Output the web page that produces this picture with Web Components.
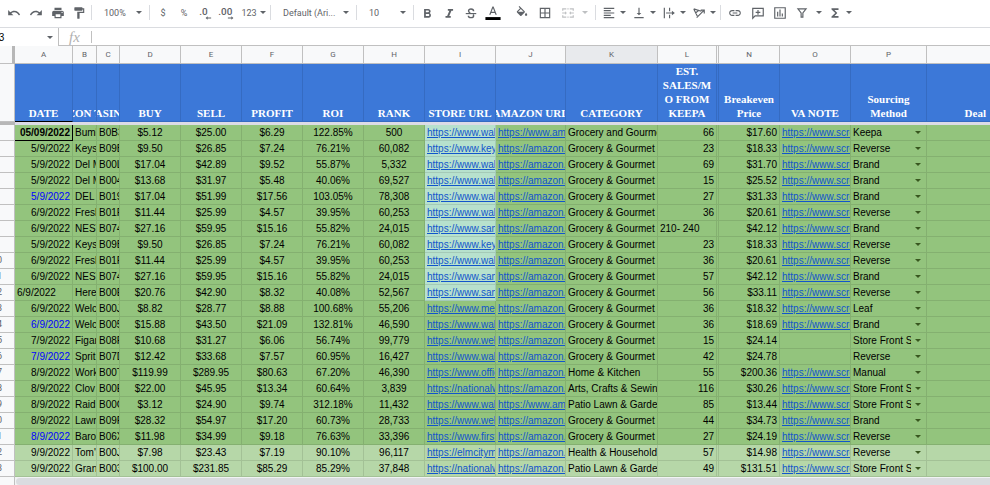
<!DOCTYPE html>
<html lang="en">
<head>
<meta charset="utf-8">
<meta name="viewport" content="width=device-width, initial-scale=1">
<title>Sourcing sheet</title>
<style>
    body {
        margin: 0;
        background: #fff;
        color: #000;
        font-family: "Liberation Sans", Arial, sans-serif;
        font-size: 10px;
        overflow: hidden;
    }
</style>
</head>
<body>
<sheet-app>
    <sheet-toolbar slot="toolbar">
        <tool-button icon="undo" label="Undo"></tool-button>
        <tool-button icon="redo" label="Redo"></tool-button>
        <tool-button icon="print" label="Print"></tool-button>
        <tool-button icon="paint" label="Paint format" class="narrow"></tool-button>
        <tool-divider></tool-divider>
        <tool-select label="Zoom" value="100%" class="zoom"></tool-select>
        <tool-divider></tool-divider>
        <tool-button label="Format as currency">$</tool-button>
        <tool-button label="Format as percent" class="narrow">%</tool-button>
        <tool-button icon="decLess" label="Decrease decimal places"></tool-button>
        <tool-button icon="decMore" label="Increase decimal places"></tool-button>
        <tool-button label="More formats" menu class="formats">123</tool-button>
        <tool-divider></tool-divider>
        <tool-select label="Font" value="Default (Ari..." class="font"></tool-select>
        <tool-divider></tool-divider>
        <tool-select label="Font size" value="10" class="size"></tool-select>
        <tool-divider></tool-divider>
        <tool-button icon="bold" label="Bold"></tool-button>
        <tool-button icon="italic" label="Italic"></tool-button>
        <tool-button icon="strike" label="Strikethrough"></tool-button>
        <tool-button icon="color" label="Text color"></tool-button>
        <tool-divider blank></tool-divider>
        <tool-button icon="fill" label="Fill color"></tool-button>
        <tool-button icon="borders" label="Borders" class="wide"></tool-button>
        <tool-button icon="merge" label="Merge cells" menu="wide" disabled></tool-button>
        <tool-divider></tool-divider>
        <tool-button icon="alignLeft" label="Horizontal align" menu></tool-button>
        <tool-button icon="alignBottom" label="Vertical align" menu></tool-button>
        <tool-button icon="wrap" label="Text wrapping" menu></tool-button>
        <tool-button icon="rotate" label="Text rotation" menu></tool-button>
        <tool-divider></tool-divider>
        <tool-button icon="link" label="Insert link" class="wide"></tool-button>
        <tool-button icon="comment" label="Insert comment"></tool-button>
        <tool-button icon="chart" label="Insert chart"></tool-button>
        <tool-button icon="filter" label="Create a filter" menu="wide"></tool-button>
        <tool-button icon="sigma" label="Functions" menu="wide" class="slim"></tool-button>
    </sheet-toolbar>
    <formula-bar slot="formula" cell="A3"></formula-bar>
    <sheet-grid slot="grid"></sheet-grid>
</sheet-app>

<script>
const ICONS = {
    undo: '<path d="M12.5 8c-2.65 0-5.05.99-6.9 2.6L2 7v9h9l-3.62-3.62c1.39-1.16 3.16-1.88 5.12-1.88 3.54 0 6.55 2.31 7.6 5.5l2.37-.78C21.08 11.03 17.15 8 12.5 8z"/>',
    redo: '<path d="M18.4 10.6C16.55 8.99 14.15 8 11.5 8c-4.65 0-8.58 3.03-9.96 7.22L3.9 16c1.05-3.19 4.05-5.5 7.6-5.5 1.95 0 3.73.72 5.12 1.88L13 16h9V7l-3.6 3.6z"/>',
    print: '<path d="M19 8H5c-1.66 0-3 1.34-3 3v6h4v4h12v-4h4v-6c0-1.66-1.34-3-3-3zm-3 11H8v-5h8v5zm3-7c-.55 0-1-.45-1-1s.45-1 1-1 1 .45 1 1-.45 1-1 1zm-1-9H6v4h12V3z"/>',
    paint: '<path d="M18 4V3c0-.55-.45-1-1-1H5c-.55 0-1 .45-1 1v4c0 .55.45 1 1 1h12c.55 0 1-.45 1-1V6h1v4H9v11c0 .55.45 1 1 1h2c.55 0 1-.45 1-1v-9h8V4h-3z"/>',
    decLess: '<text x="2" y="16" font-size="17" font-weight="500">.0</text><path d="M13 20.500l3.500-3v2h6v2h-6v2z"/>',
    decMore: '<text x="-3" y="16" font-size="17" font-weight="500">.00</text><path d="M23 20.500l-3.500-3v2h-6v2h6v2z"/>',
    bold: '<path d="M16.600 11.790c.97-.67 1.650-1.770 1.650-2.790 0-2.260-1.750-4-4-4H7v15h8.040c2.090 0 3.710-2.200 3.710-4.290 0-1.520-.86-3.320-2.150-3.920zM10 7.500h4c.83 0 1.500.67 1.500 1.500s-.67 1.500-1.500 1.500h-4v-3zm4.500 9.500H10v-3.500h4.500c.83 0 1.500.9 1.500 1.750s-.67 1.750-1.500 1.750z"/>',
    italic: '<path d="M10 5v3h2.600l-3.800 9H6v3h9v-3h-2.600l3.800-9H19V5z"/>',
    strike: '<path d="M3 12h18v2H3z"/><path d="M16.500 9c0-2.500-2-3.800-4.500-3.800S7.800 6.500 7.800 8.500c0 1.500 1 2.500 3 3M7.500 16.500c0 2 2 3.500 4.500 3.500s4.500-1.200 4.500-3.300c0-1-.4-1.700-1-2.300" fill="none" stroke="currentColor" stroke-width="2.400"/>',
    color: '<path d="M11 1L5.500 15h2.300l1.100-3h6.200l1.100 3h2.300L13 1h-2zm-1.400 9L12 3.700 14.400 10H9.600z"/><path d="M-1 19h26v5H-1z" fill="#000"/>',
    fill: '<path d="M16.560 8.940L7.620 0 6.210 1.410l2.380 2.380-5.150 5.150c-.59.59-.59 1.540 0 2.120l5.500 5.500c.29.29.68.44 1.060.44s.77-.15 1.060-.44l5.500-5.500c.59-.58.59-1.530 0-2.120zM5.210 10L10 5.210 14.790 10H5.210zM19 11.500s-2 2.170-2 3.500c0 1.100.9 2 2 2s2-.9 2-2c0-1.330-2-3.500-2-3.500z"/>',
    borders: '<path d="M3 3v18h18V3H3zm8 16H5v-6h6v6zm0-8H5V5h6v6zm8 8h-6v-6h6v6zm0-8h-6V5h6v6z"/>',
    merge: '<path d="M2 8V4h7v2H4v2zM15 4h7v4h-2V6h-5zM2 16v4h7v-2H4v-2zM15 20h7v-4h-2v2h-5zM11 4h2v2h-2zM11 18h2v2h-2zM2 11h5V9l3 3-3 3v-2H2zM22 11h-5V9l-3 3 3 3v-2h5z"/>',
    alignLeft: '<path d="M15 15H3v2h12v-2zm0-8H3v2h12V7zM3 13h18v-2H3v2zm0 8h18v-2H3v2zM3 3v2h18V3H3z"/>',
    alignBottom: '<path d="M16 12h-3V3h-2v9H8l4 4 4-4zM4 19v2h16v-2H4z"/>',
    wrap: '<path d="M3 3h2v18H3zM12 3h2v6h-2zM12 15h2v6h-2zM7 11h10V8l5 4-5 4v-3H7z"/>',
    rotate: '<path d="M3 5l13 4M3 5l6 12M6 12l6-5M8 20L20 8M21 13V7h-6" fill="none" stroke="currentColor" stroke-width="2"/>',
    link: '<path d="M3.900 12c0-1.710 1.390-3.100 3.100-3.100h4V7H7c-2.760 0-5 2.240-5 5s2.240 5 5 5h4v-1.900H7c-1.710 0-3.100-1.390-3.100-3.100zM8 13h8v-2H8v2zm9-6h-4v1.900h4c1.710 0 3.100 1.390 3.100 3.100s-1.390 3.100-3.100 3.100h-4V17h4c2.760 0 5-2.240 5-5s-2.240-5-5-5z"/>',
    comment: '<path d="M3 4h18v13H7l-4 4z" fill="none" stroke="currentColor" stroke-width="2"/><path d="M11 7h2v3h3v2h-3v3h-2v-3H8v-2h3z"/>',
    chart: '<path d="M3 3h18v18H3z" fill="none" stroke="currentColor" stroke-width="2"/><path d="M7 10h2v8H7zM11 6h2v12h-2zM15 13h2v5h-2z"/>',
    filter: '<path d="M5 5h14l-5.500 7v7h-3v-7z" fill="none" stroke="currentColor" stroke-width="2"/>',
    sigma: '<path d="M18 4H6v2l6.500 6L6 18v2h12v-3h-7l5-5-5-5h7z"/>'
};

const COLUMNS = [
    { id: 'A', title: 'DATE', width: 58, align: 'right' },
    { id: 'B', title: 'AMAZON TITLE', width: 24 },
    { id: 'C', title: 'ASIN', width: 23 },
    { id: 'D', title: 'BUY', width: 61, align: 'center' },
    { id: 'E', title: 'SELL', width: 61, align: 'center' },
    { id: 'F', title: 'PROFIT', width: 61, align: 'center' },
    { id: 'G', title: 'ROI', width: 61, align: 'center' },
    { id: 'H', title: 'RANK', width: 61, align: 'center' },
    { id: 'I', title: 'STORE URL', width: 71, type: 'link' },
    { id: 'J', title: 'AMAZON URL', width: 70, type: 'link' },
    { id: 'K', title: 'CATEGORY', width: 92, selected: true },
    { id: 'L', title: 'EST.\nSALES/M\nO FROM\nKEEPA', width: 59, align: 'right' },
    { id: '', title: '', width: 2, type: 'hidden' },
    { id: 'N', title: 'Breakeven\nPrice', width: 61, align: 'right' },
    { id: 'O', title: 'VA NOTE', width: 71, type: 'link' },
    { id: 'P', title: 'Sourcing\nMethod', width: 76, type: 'select' },
    { id: '', title: 'Deal', type: 'last' }
];

const AMZ = 'https://amazon.c';
const AMW = 'https://www.amaz';
const SCR = 'https://www.scree';
const GG = 'Grocery & Gourmet';
const STORE = 'Store Front St';

const ROWS = [
    ['05/09/2022', 'Bumb', 'B0B3', '$5.12', '$25.00', '$6.29', '122.85%', '500', 'https://www.walm', AMW, 'Grocery and Gourme', '66', '', '$17.60', SCR, 'Keepa'],
    ['5/9/2022', 'Keys', 'B09B', '$9.50', '$26.85', '$7.24', '76.21%', '60,082', 'https://www.keys', AMZ, GG, '23', '', '$18.33', SCR, 'Reverse'],
    ['5/9/2022', 'Del M', 'B00L', '$17.04', '$42.89', '$9.52', '55.87%', '5,332', 'https://www.walm', AMZ, GG, '69', '', '$31.70', SCR, 'Brand'],
    ['5/9/2022', 'Del M', 'B004', '$13.68', '$31.97', '$5.48', '40.06%', '69,527', 'https://www.walm', AMZ, GG, '15', '', '$25.52', SCR, 'Brand'],
    ['5/9/2022', 'DEL', 'B019', '$17.04', '$51.99', '$17.56', '103.05%', '78,308', 'https://www.walm', AMZ, GG, '27', '', '$31.33', SCR, 'Brand'],
    ['6/9/2022', 'Fresh', 'B01F', '$11.44', '$25.99', '$4.57', '39.95%', '60,253', 'https://www.walm', AMZ, GG, '36', '', '$20.61', SCR, 'Reverse'],
    ['6/9/2022', 'NEST', 'B074', '$27.16', '$59.95', '$15.16', '55.82%', '24,015', 'https://www.sams', AMZ, GG, '210- 240', '', '$42.12', SCR, 'Brand'],
    ['5/9/2022', 'Keys', 'B09B', '$9.50', '$26.85', '$7.24', '76.21%', '60,082', 'https://www.keys', AMZ, GG, '23', '', '$18.33', SCR, 'Reverse'],
    ['6/9/2022', 'Fresh', 'B01F', '$11.44', '$25.99', '$4.57', '39.95%', '60,253', 'https://www.walm', AMZ, GG, '36', '', '$20.61', SCR, 'Reverse'],
    ['6/9/2022', 'NEST', 'B074', '$27.16', '$59.95', '$15.16', '55.82%', '24,015', 'https://www.sams', AMZ, GG, '57', '', '$42.12', SCR, 'Brand'],
    ['6/9/2022', 'Here', 'B00E', '$20.76', '$42.90', '$8.32', '40.08%', '52,567', 'https://www.sams', AMZ, GG, '56', '', '$33.11', SCR, 'Reverse'],
    ['6/9/2022', 'Welc', 'B00J', '$8.82', '$28.77', '$8.88', '100.68%', '55,206', 'https://www.meij', AMZ, GG, '36', '', '$18.32', SCR, 'Leaf'],
    ['6/9/2022', 'Welc', 'B005', '$15.88', '$43.50', '$21.09', '132.81%', '46,590', 'https://www.walm', AMZ, GG, '36', '', '$18.69', SCR, 'Brand'],
    ['7/9/2022', 'Figar', 'B08F', '$10.68', '$31.27', '$6.06', '56.74%', '99,779', 'https://www.webs', AMZ, GG, '15', '', '$24.14', '', STORE],
    ['7/9/2022', 'Sprit', 'B07D', '$12.42', '$33.68', '$7.57', '60.95%', '16,427', 'https://www.walm', AMZ, GG, '42', '', '$24.78', '', 'Reverse'],
    ['8/9/2022', 'Work', 'B00T', '$119.99', '$289.95', '$80.63', '67.20%', '46,390', 'https://www.offic', AMZ, 'Home & Kitchen', '55', '', '$200.36', SCR, 'Manual'],
    ['8/9/2022', 'Clov', 'B00E', '$22.00', '$45.95', '$13.34', '60.64%', '3,839', 'https://nationalw', AMZ, 'Arts, Crafts & Sewin', '116', '', '$30.26', SCR, STORE],
    ['8/9/2022', 'Raid', 'B00C', '$3.12', '$24.90', '$9.74', '312.18%', '11,432', 'https://www.walm', AMW, 'Patio Lawn & Garde', '85', '', '$13.44', SCR, STORE],
    ['8/9/2022', 'Lawr', 'B09F', '$28.32', '$54.97', '$17.20', '60.73%', '28,733', 'https://www.webs', AMZ, GG, '44', '', '$34.73', SCR, 'Brand'],
    ['8/9/2022', 'Baro', 'B06X', '$11.98', '$34.99', '$9.18', '76.63%', '33,396', 'https://www.first', AMZ, GG, '27', '', '$24.19', SCR, 'Reverse'],
    ['9/9/2022', "Tom's", 'B00J', '$7.98', '$23.43', '$7.19', '90.10%', '96,117', 'https://elmcitym', AMZ, 'Health & Household', '57', '', '$14.98', SCR, 'Reverse'],
    ['9/9/2022', 'Gran', 'B003', '$100.00', '$231.85', '$85.29', '85.29%', '37,848', 'https://nationalw', AMZ, 'Patio Lawn & Garde', '49', '', '$131.51', SCR, STORE]
];

// row indexes that carry their own formatting
const BLUE_DATES = [4, 12, 14, 19];
const LEFT_CELLS = { A: [10], L: [6] };
const TEAL_UNTIL = 11;
const LIGHT_FROM = 20;

const escapeText = (text) => text.replace(/&/g, '&amp;').replace(/</g, '&lt;');

const CARET = `
    .caret {
        flex: none;
        width: 0;
        height: 0;
        border: 3px solid transparent;
        border-top-color: currentColor;
        border-bottom: 0;
        pointer-events: none;
    }
`;

class SheetApp extends HTMLElement {
    constructor() {
        super();
        this.attachShadow({ mode: 'open' }).innerHTML = `
        <style>
        :host {
            display: flex;
            flex-direction: column;
            min-height: 100vh;
        }
        .scroll {
            display: flex;
            flex: 1;
            min-height: 8px;
            background: #f1f3f4;
        }
        .corner {
            width: 14px;
            border-right: 1px solid #c0c0c0;
            background: #f8f9fa;
        }
        .thumb {
            flex: 1;
            margin: 1px 0 0 1px;
            border-radius: 4px 0 0 4px;
            background: #dadce0;
        }
        </style>
        <slot name="toolbar"></slot>
        <slot name="formula"></slot>
        <slot name="grid"></slot>
        <div class="scroll"><div class="corner"></div><div class="thumb"></div></div>
        `;
    }
}

class SheetToolbar extends HTMLElement {
    constructor() {
        super();
        this.attachShadow({ mode: 'open' }).innerHTML = `
        <style>
        :host {
            display: flex;
            align-items: center;
            height: 25px;
            padding: 0 0 2px 3px;
            border-bottom: 1px solid #dadce0;
            color: #5f6368;
            font-family: Roboto, sans-serif;
            font-size: 9px;
        }
        </style>
        <slot></slot>
        `;
    }
}

class ToolDivider extends HTMLElement {
    constructor() {
        super();
        this.attachShadow({ mode: 'open' }).innerHTML = `
        <style>
        :host {
            display: block;
            flex: none;
            width: 1px;
            height: 15px;
            margin: 0 2px;
            background: #dadce0;
        }
        :host([blank]) {
            margin: 0 3px;
            background: none;
        }
        </style>
        `;
    }
}

class ToolButton extends HTMLElement {
    constructor() {
        super();
        this.attachShadow({ mode: 'open' });
    }
    connectedCallback() {
        const icon = this.getAttribute('icon');
        const face = icon
            ? `<svg viewBox="0 0 24 24" aria-hidden="true">${ICONS[icon]}</svg>`
            : '<slot></slot>';
        const caret = this.hasAttribute('menu') ? '<span class="caret"></span>' : '';
        const disabled = this.hasAttribute('disabled') ? 'disabled' : '';
        this.shadowRoot.innerHTML = `
        <style>
        :host {
            display: block;
            flex: none;
            --face: 22px;
        }
        :host(.narrow) { --face: 20px; }
        :host(.wide) { --face: 24px; }
        :host(.slim) { --face: 16px; }
        :host([disabled]) { opacity: .4; }
        button {
            display: flex;
            align-items: center;
            height: 24px;
            padding: 0;
            border: 0;
            background: none;
            color: inherit;
            font: inherit;
        }
        :host([menu]) button { padding-right: 2px; }
        :host([menu="wide"]) button { padding-right: 5px; }
        :host([menu="wide"]) .caret { margin-left: 3px; }
        .face {
            display: flex;
            justify-content: center;
            width: var(--face);
        }
        svg {
            flex: none;
            width: 14px;
            height: 14px;
            fill: currentColor;
            overflow: visible;
        }
        ${CARET}
        </style>
        <button type="button" aria-label="${this.getAttribute('label')}" ${disabled}><span class="face">${face}</span>${caret}</button>
        `;
    }
}

class ToolSelect extends HTMLElement {
    constructor() {
        super();
        this.attachShadow({ mode: 'open' });
    }
    connectedCallback() {
        this.shadowRoot.innerHTML = `
        <style>
        :host {
            display: flex;
            flex: none;
            align-items: center;
            box-sizing: border-box;
            padding: 0 5px 0 10px;
        }
        :host(.zoom) { width: 53px; }
        :host(.font) { width: 81px; }
        :host(.size) { width: 52px; }
        select {
            flex: 1;
            min-width: 0;
            height: 20px;
            padding: 0;
            border: 0;
            appearance: none;
            background: none;
            color: inherit;
            font: inherit;
        }
        ${CARET}
        </style>
        <select aria-label="${this.getAttribute('label')}"><option>${this.getAttribute('value')}</option></select>
        <span class="caret"></span>
        `;
    }
}

class FormulaBar extends HTMLElement {
    constructor() {
        super();
        this.attachShadow({ mode: 'open' });
    }
    connectedCallback() {
        this.shadowRoot.innerHTML = `
        <style>
        :host {
            display: flex;
            height: 18px;
            color: #5f6368;
        }
        .name {
            display: flex;
            align-items: center;
            box-sizing: border-box;
            width: 59px;
            padding: 0 5px 0 0;
            border-right: 1px solid #c0c0c0;
            overflow: hidden;
        }
        input {
            flex: 1;
            min-width: 0;
            padding: 0;
            border: 0;
            outline: 0;
            background: none;
            color: #000;
            font: inherit;
        }
        /* the name box runs past the left edge of the window */
        .name input { margin-left: -8px; }
        .formula {
            display: flex;
            flex: 1;
            align-items: center;
            border-bottom: 1px solid #c0c0c0;
        }
        .fx {
            box-sizing: border-box;
            width: 33px;
            height: 12px;
            padding-left: 10px;
            border-right: 1px solid #c0c0c0;
            color: #b0b0b0;
            font: italic 15px/12px "Liberation Serif", serif;
        }
        ${CARET}
        </style>
        <div class="name">
            <input type="text" aria-label="Name box" value="${this.getAttribute('cell')}">
            <span class="caret"></span>
        </div>
        <div class="formula">
            <label class="fx" for="formula">fx</label>
            <input type="text" id="formula">
        </div>
        `;
    }
}

class SheetGrid extends HTMLElement {
    constructor() {
        super();
        this.attachShadow({ mode: 'open' });
    }
    connectedCallback() {
        this.render();
    }
    renderCell(column, value, index) {
        const classes = [column.type || '', column.align || ''];
        let body = escapeText(value || '');
        if (column.id === 'A' && BLUE_DATES.includes(index)) classes.push('blue');
        if (column.id === 'A' && index === 0) classes.push('active');
        if (column.id === 'I' && index < TEAL_UNTIL) classes.push('teal');
        if ((LEFT_CELLS[column.id] || []).includes(index)) classes.push('left');
        if (column.type === 'link' && value) {
            body = `<a href="${value}">${body}</a>`;
        }
        if (column.type === 'select') {
            body = `<div class="pick"><select aria-label="Sourcing method, row ${index + 2}"><option>${body}</option></select><span class="caret"></span></div>`;
        }
        return `<td class="${classes.join(' ').trim()}">${body}</td>`;
    }
    render() {
        const cols = COLUMNS.map((c) => c.width ? `<col style="width:${c.width}px">` : '<col>').join('');
        const letters = COLUMNS.map((c) => `<th scope="col" class="${c.selected ? 'selected' : ''}">${c.id}</th>`).join('');
        const titles = COLUMNS.map((c) => `<th scope="col" class="${c.type || ''}"><div class="title">${c.title}</div></th>`).join('');
        const rows = ROWS.map((row, i) => `
            <tr class="${i >= LIGHT_FROM ? 'light' : ''}">
                <th scope="row"><div class="num">${i + 2}</div></th>
                ${COLUMNS.map((c, n) => this.renderCell(c, row[n], i)).join('')}
            </tr>`).join('');

        this.shadowRoot.innerHTML = `
        <style>
        :host {
            display: block;
        }
        table {
            width: 100%;
            table-layout: fixed;
            border-collapse: separate;
            border-spacing: 0;
        }
        th, td {
            box-sizing: border-box;
            padding: 0;
            overflow: hidden;
            white-space: nowrap;
            border: 0 solid rgba(0, 0, 0, .1);
            border-width: 0 1px 1px 0;
        }
        tr > :last-child { border-right: 0; }
        .letters th, .letters .corner {
            height: 18px;
            border-color: #c0c0c0;
            background: #f8f9fa;
            color: #5f6368;
            font: 8px/17px Roboto, sans-serif;
        }
        .letters .selected { background: #e8eaed; }
        .letters .corner { border-right: 3px solid #b7b7b7; }
        .titles th {
            height: 58px;
            background: #3c78d8;
            color: #fff;
            font: bold 11px/14px "Liberation Serif", serif;
            vertical-align: bottom;
        }
        .title {
            display: flex;
            justify-content: center;
            padding-bottom: 1px;
            text-align: center;
            white-space: pre;
        }
        .last .title {
            justify-content: flex-end;
            padding-right: 4px;
        }
        .titles th:nth-child(2) { border-bottom-color: #000; }
        .titles .rowhead, tbody th {
            border-color: #c0c0c0;
            background: #f8f9fa;
        }
        .freeze td {
            height: 3px;
            border: 0;
            background: #dcdce6;
        }
        .freeze td:first-child { background: #b7b7b7; }
        tbody th, tbody td {
            height: 16px;
            line-height: 15px;
        }
        tbody th {
            color: #5f6368;
            font: 9px/15px Roboto, sans-serif;
        }
        /* row numbers are centred on a header that starts off screen */
        .num {
            width: 16px;
            margin-left: -11px;
        }
        tbody td {
            padding: 0 2px;
            background: #93c47d;
        }
        tbody .hidden { padding: 0; }
        .light td { background: #b6d7a8; }
        tbody .teal { background: #b7e1cd; }
        .right { text-align: right; }
        .center { text-align: center; }
        td.left { text-align: left; }
        .blue { color: #00f; }
        .active {
            border-color: #000;
            font-weight: bold;
        }
        a {
            color: #15c;
            text-decoration: underline;
        }
        .pick {
            display: flex;
            align-items: center;
            gap: 4px;
            height: 15px;
            padding-right: 3px;
            overflow: hidden;
        }
        select {
            flex: 1;
            min-width: 0;
            height: 15px;
            padding: 0;
            border: 0;
            appearance: none;
            background: none;
            color: inherit;
            font: inherit;
        }
        ${CARET}
        .pick .caret { color: #38571f; }
        </style>
        <table>
            <colgroup><col style="width:15px">${cols}</colgroup>
            <thead>
                <tr class="letters"><td class="corner"></td>${letters}</tr>
                <tr class="titles"><td class="rowhead"></td>${titles}</tr>
                <tr class="freeze"><td></td><td colspan="${COLUMNS.length}"></td></tr>
            </thead>
            <tbody>${rows}</tbody>
        </table>
        `;
    }
}

customElements.define('sheet-app', SheetApp);
customElements.define('sheet-toolbar', SheetToolbar);
customElements.define('tool-divider', ToolDivider);
customElements.define('tool-button', ToolButton);
customElements.define('tool-select', ToolSelect);
customElements.define('formula-bar', FormulaBar);
customElements.define('sheet-grid', SheetGrid);
</script>
</body>
</html>
